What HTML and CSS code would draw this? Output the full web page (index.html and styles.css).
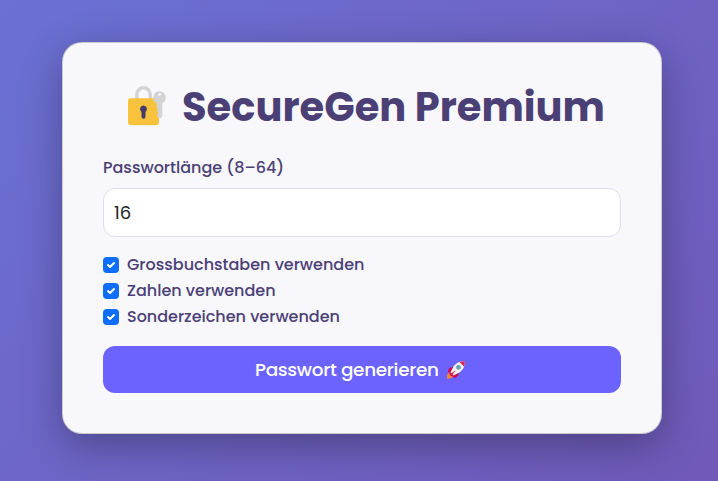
FILE: index.html
```html
<!DOCTYPE html>
<html lang="de">
<head>
<meta charset="utf-8">
<title>SecureGen Premium</title>
<link rel="stylesheet" href="styles.css">
</head>
<body>
<main class="card">
  <h1 class="title">
    <svg class="lock" viewBox="0 0 40 42" aria-hidden="true">
      <path d="M8.800 16V9.500a6.700 6.700 0 0 1 13.400 0V16" fill="none" stroke="#d3d3d3" stroke-width="3.400"/>
      <path d="M3 13.300H27.500Q31 13.300 31 16V25l-1 2 1 2-1 2 1 2V37Q31 40.300 27.700 40.300H3.300Q0 40.300 0 37V16Q0 13.300 3 13.300Z" fill="#f9c23c"/>
      <path d="M15.500 20.500a3.600 3.600 0 0 0-2 6.500V31.800a2 2 0 0 0 4 0V27a3.600 3.600 0 0 0-2-6.500Z" fill="#433b6b"/>
      <path d="M31.700 6.200a6.400 6.400 0 0 0-3 12L28.700 22.500l1.400 1.500-1.400 2 1.400 2-1.400 2 2 3L32.800 33 34.300 31.500V18.300A6.400 6.400 0 0 0 31.700 6.200Z" fill="#d3d3d3"/>
      <circle cx="31.700" cy="9.400" r="1.400" fill="#f7f7fc"/>
    </svg>
    <span>SecureGen Premium</span>
  </h1>
  <form class="form">
    <label class="label" for="length">Passwortlänge (8–64)</label>
    <input class="length" id="length" type="text" value="16">
    <div class="options">
      <label class="option"><svg class="check" viewBox="0 0 16 16"><rect width="16" height="16" rx="4"/><path d="M5 8l2 2 4-4"/></svg><span>Grossbuchstaben verwenden</span></label>
      <label class="option"><svg class="check" viewBox="0 0 16 16"><rect width="16" height="16" rx="4"/><path d="M5 8l2 2 4-4"/></svg><span>Zahlen verwenden</span></label>
      <label class="option"><svg class="check" viewBox="0 0 16 16"><rect width="16" height="16" rx="4"/><path d="M5 8l2 2 4-4"/></svg><span>Sonderzeichen verwenden</span></label>
    </div>
    <button class="generate" type="button"><span>Passwort generieren</span>
      <svg class="rocket" viewBox="0 0 20 20" aria-hidden="true">
        <path d="M4 11.500 1.200 14.500 1 19l4.500-1L8 15.500Z" fill="#ff823b"/>
        <path d="M7 7Q3 7 2 11L4.500 15.500 9 18Q13 16 13 12Z" fill="#ca0b4a"/>
        <path d="M18.700 1.200Q11.500 1 7.500 6.500L4.500 12.500 7.500 15.500 13.500 12.500Q19 8.500 18.700 1.200Z" fill="#f4f4f4"/>
        <path d="M18.700 1.200Q16 1 13.500 2L18 6.500Q19 4 18.700 1.200Z" fill="#df2050"/>
        <path d="M10 10 4.500 14 6 15.500Z" fill="#df2050"/>
        <circle cx="12.500" cy="7.300" r="2.100" fill="#55a8cd" stroke="#9b9b9b" stroke-width=".8"/>
      </svg>
    </button>
  </form>
</main>
</body>
</html>
```
FILE: styles.css
```css
* { box-sizing: border-box; }
body {
  margin: 0;
  min-height: 100vh;
  padding: 42px 56px 47px 62px;
  background: linear-gradient(135deg, #6b70d4, #7059b8);
  font-family: Poppins, Inter, sans-serif;
  font-weight: 500;
  color: #4b4075;
  overflow: hidden;
}
.card {
  width: 600px;
  height: 392px;
  padding: 40px;
  border: 1px solid rgba(0, 0, 0, .176);
  border-radius: 20px;
  background: #f7f7fc;
  box-shadow: 0 12px 40px rgba(0, 0, 0, .3);
}
.title {
  display: flex;
  align-items: center;
  height: 48px;
  margin: 0 0 25px;
  padding-left: 25px;
  font-size: 40px;
  font-weight: 700;
  line-height: 48px;
  white-space: nowrap;
}
.lock { width: 40px; height: 42px; margin: -2px 14px 0 0; flex: none; }
.form { display: flex; flex-direction: column; }
.label { height: 24px; margin-bottom: 8px; font-size: 16px; line-height: 24px; }
.length {
  height: 49px;
  padding: 0 10px;
  border: 1px solid #dedeea;
  border-radius: 12px;
  background: #fff;
  color: #212529;
  font: 400 18px Poppins, Inter, sans-serif;
  outline: none;
}
.options { display: grid; gap: 2px; margin: 16px 0 17px; }
.option { display: flex; align-items: center; gap: 8px; height: 24px; font-size: 16px; line-height: 24px; }
.check { width: 16px; height: 16px; fill: #0d6efd; }
.check path { fill: none; stroke: #fff; stroke-width: 2; stroke-linecap: round; stroke-linejoin: round; }
.generate {
  display: flex;
  align-items: center;
  height: 47px;
  padding: 0 0 0 152px;
  border: 0;
  border-radius: 12px;
  background: #6c63ff;
  color: #fff;
  font: 500 18.4px Poppins, Inter, sans-serif;
  letter-spacing: -.3px;
}
.generate span { width: 191px; text-align: left; white-space: nowrap; }
.rocket { width: 20px; height: 20px; }
```
